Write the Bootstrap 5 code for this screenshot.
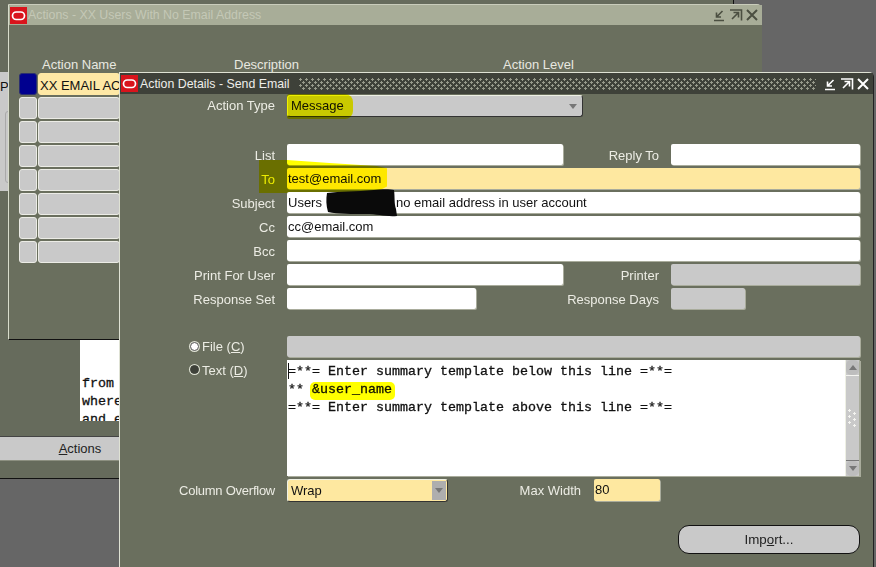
<!DOCTYPE html>
<html lang="en">

<head>
    <meta charset="UTF-8">
    <title>Action Details - Send Email</title>
    <link href="https://cdn.jsdelivr.net/npm/bootstrap@5.3.0/dist/css/bootstrap.min.css" rel="stylesheet">
    <style>
        body {
            margin: 0;
            background: #666666;
            font-family: "Liberation Sans", Arial, sans-serif;
            font-size: 13px;
        }

        .desk {
            width: 876px;
            height: 567px;
            overflow: hidden;
        }

        /* windows on the desktop */
        .base-win {
            left: 0;
            top: 0;
            width: 734px;
            height: 479px;
            background: #666b5c;
            border-right: 1px solid #111;
            border-bottom: 1px solid #111;
        }

        .back-win {
            left: 8px;
            top: 4px;
            width: 754px;
            height: 336px;
            background: #6a6f5e;
            border-left: 1px solid #d8dccb;
            border-top: 1px solid #c9ccbb;
            border-bottom: 1px solid #111;
            border-top-right-radius: 5px;
        }

        .front-win {
            left: 119px;
            top: 72px;
            width: 755px;
            height: 500px;
            background: #6a6f5e;
            border-left: 1px solid #dfe2d4;
            border-top: 1px solid #dfe2d4;
            border-right: 1px solid #222;
            border-top-right-radius: 5px;
            isolation: isolate;
        }

        /* base window pieces */
        .left-strip {
            width: 8px;
            height: 119px;
            margin-top: 72px;
            background: #c9c9c9;
            color: #111;
            padding-top: 5px;
            overflow: hidden;
        }

        .strip-frame {
            width: 6px;
            height: 72px;
            margin: 14px 0 0 5px;
            border: 1px solid #a9a9a9;
            border-radius: 3px;
        }

        .sql-box {
            width: 40px;
            height: 81px;
            margin: 149px 0 0 80px;
            padding: 35px 0 0 2px;
            background: #fff;
            overflow: hidden;
            white-space: pre;
            color: #111;
        }

        .mono-txt {
            font-family: "Liberation Mono", "Courier New", monospace;
            font-size: 13.33px;
            line-height: 18px;
            -webkit-text-stroke: 0.3px #111;
        }

        .actions-btn {
            width: 160px;
            height: 25px;
            margin-top: 15px;
            padding-top: 2px;
            background: #c9c9c9;
            color: #222;
            text-align: center;
            border-top: 1px solid #444;
            border-bottom: 1px solid #8c8f80;
        }

        /* title bars */
        .win-title {
            height: 20px;
            padding: 0 3px 0 1px;
            font-size: 12.35px;
        }

        .back-win .win-title {
            background: #a8ad98;
            color: #c4c8b6;
        }

        .front-win .win-title {
            height: 21px;
            background: #3e4139;
            color: #eeeeea;
        }

        .front-win .title-txt {
            margin: 1px 0 0 1px;
        }

        .title-dots {
            height: 12px;
            margin: 0 6px 0 9px;
            background-image:
                radial-gradient(circle at 1.5px 1.5px, #979a8b 1px, transparent 1.3px),
                radial-gradient(circle at 4.5px 4.5px, #979a8b 1px, transparent 1.3px);
            background-size: 6px 6px;
        }

        .logo-ic {
            width: 17px;
            height: 17px;
            margin-right: 1px;
            flex: none;
        }

        .ctl-ic {
            width: 14px;
            height: 14px;
            margin-left: 2px;
            flex: none;
        }

        .ctl-dim {
            color: #4b4f41;
        }

        /* multi-row block behind the details window */
        .head-row {
            height: 48px;
            padding-top: 32px;
            color: #e8e8e0;
            white-space: nowrap;
        }

        .head-col {
            line-height: 15px;
        }

        .data-row {
            height: 22px;
            margin: 0 0 2px 10px;
        }

        .row-handle {
            width: 18px;
            height: 22px;
            background: #c9c9c9;
            border: 1px solid #ecece6;
            border-radius: 3px;
        }

        .row-handle.on {
            background: #00008f;
            border-color: #2b2f6f;
        }

        .row-cell {
            width: 82px;
            height: 22px;
            margin-left: 1px;
            padding: 2px 1px 0;
            background: #c9c9c9;
            border: 1px solid #ecece6;
            border-radius: 3px;
            color: #111;
            white-space: nowrap;
        }

        .row-cell.on {
            background: #fee8a5;
            border-color: #fee8a5;
        }

        /* details form */
        .form-body {
            padding-top: 1px;
        }

        .fld-row {
            height: 21px;
            margin-bottom: 3px;
        }

        .lbl-main {
            width: 155px;
            flex: none;
            text-align: right;
            color: #ecece4;
            white-space: nowrap;
            padding-top: 2px;
        }

        .lbl-main.lbl-top {
            padding-top: 1px;
        }

        .lbl-main.lbl-tight {
            letter-spacing: -0.25px;
        }

        .lbl-side {
            flex: none;
            text-align: right;
            color: #ecece4;
            white-space: nowrap;
            padding-top: 2px;
        }

        .form-control.ora-fld {
            height: 21px;
            min-height: 0;
            flex: none;
            padding: 3px 1px 0;
            font-size: 13px;
            line-height: 15px;
            color: #111;
            background: #fff;
            border: 0;
            border-radius: 2px;
            box-shadow: 1px 1px 0 #a9ac9c;
            white-space: nowrap;
        }

        .form-control.ora-fld.req {
            background: #fee8a0;
        }

        .form-control.ora-fld.off {
            background: #c9c9c9;
        }

        .form-control.ora-fld.tall {
            height: 22px;
        }

        .w-full {
            width: 573px;
        }

        .w-a {
            width: 276px;
        }

        .w-b {
            width: 189px;
        }

        .w-c {
            width: 74px;
        }

        .w-num {
            width: 66px;
        }

        .gap-l {
            margin-left: 12px;
        }

        .gap-n {
            margin-left: 13px;
        }

        .side-a {
            width: 96px;
        }

        .side-b {
            width: 183px;
        }

        .side-c {
            width: 133px;
        }

        /* pick lists */
        .pick-box {
            height: 22px;
            padding: 0 1px 0 3px;
            color: #111;
            background: #c9c9c9;
            border: 1px solid #eef0e4;
            border-bottom-color: #333;
            border-right-color: #333;
            border-radius: 3px;
            flex: none;
            font-size: 13px;
        }

        .pick-box.type-sel {
            width: 296px;
            margin-bottom: 27px;
        }

        .pick-box.req {
            width: 161px;
            height: 23px;
            background: #fee8a0;
        }

        .pick-arrow {
            width: 0;
            height: 0;
            border-left: 4px solid transparent;
            border-right: 4px solid transparent;
            border-top: 5px solid #777;
        }

        .pick-btn {
            width: 14px;
            height: 19px;
            background: #aeaeae;
        }

        /* radios */
        .radio-lbl {
            width: 155px;
            flex: none;
            padding: 0 0 0 70px;
            color: #ecece4;
            white-space: nowrap;
        }

        .radio-lbl.text-opt {
            padding-top: 1px;
        }

        .radio-dot {
            width: 9px;
            height: 9px;
            margin-right: 3px;
            border-radius: 50%;
            background: #fff;
            border: 1px solid #555;
            box-shadow: 0 0 0 1px #dfe2d4;
            flex: none;
        }

        .radio-dot.on {
            background: #3e4139;
            border-color: #3e4139;
        }

        /* message text */
        .msg-box {
            width: 573px;
            height: 116px;
            background: #fff;
            box-shadow: 1px 1px 0 #a9ac9c;
            color: #111;
            margin-bottom: 3px;
        }

        .msg-text {
            padding: 3px 0 0 1px;
            white-space: pre;
        }

        .caret-mark {
            left: 1px;
            top: 3px;
            width: 1px;
            height: 16px;
            background: #111;
        }

        .scroll-rail {
            width: 15px;
            background: #c9c9c9;
            border-left: 1px solid #eef0e4;
            border-right: 1px solid #a9ac9c;
        }

        .scroll-end {
            height: 15px;
            border-radius: 5px;
            background: #bdbdbd;
        }

        .scroll-mid {
            border-top: 1px solid #f4f4f0;
            border-bottom: 1px solid #777;
        }

        .scroll-grip {
            width: 9px;
            height: 18px;
            background-image:
                radial-gradient(circle at 1.5px 1.5px, #f4f4f0 1px, transparent 1.3px),
                radial-gradient(circle at 6.5px 4.5px, #f4f4f0 1px, transparent 1.3px);
            background-size: 9px 6px;
        }

        .up-tri {
            width: 0;
            height: 0;
            border-left: 4px solid transparent;
            border-right: 4px solid transparent;
            border-bottom: 5px solid #777;
        }

        .down-tri {
            width: 0;
            height: 0;
            border-left: 4px solid transparent;
            border-right: 4px solid transparent;
            border-top: 5px solid #777;
        }

        .btn.import-btn {
            width: 182px;
            height: 29px;
            margin: 23px 0 0 558px;
            padding: 0;
            font-size: 13.33px;
            color: #222;
            background: #c9c9c9;
            border: 1px solid #111;
            border-radius: 11px;
            display: block;
        }

        /* marker pen on top of the form */
        .pen-mark {
            background: #ffff00;
            mix-blend-mode: multiply;
            pointer-events: none;
        }

        .pen-type {
            left: 167px;
            top: -1px;
            width: 66px;
            height: 25px;
            border-radius: 2px 8px 8px 2px;
        }

        .pen-to {
            left: 139px;
            top: -8px;
            width: 128px;
            height: 33px;
            clip-path: polygon(0 0, 22% 0, 55% 3px, 92% 6px, 100% 25%, 100% 80%, 90% 100%, 22% 100%, 0 100%);
        }

        .pen-name {
            left: 23px;
            top: 22px;
            width: 85px;
            height: 18px;
            border-radius: 5px;
        }

        .ink-blot {
            left: 206px;
            top: -3px;
            width: 74px;
            height: 28px;
        }
    </style>
</head>

<body>
    <svg width="0" height="0" class="position-absolute">
        <symbol id="ora-logo" viewBox="0 0 17 17">
            <rect width="17" height="17" fill="#d8141c" />
            <rect x="2.5" y="5" width="12" height="7.5" rx="3.7" fill="none" stroke="#fff" stroke-width="1.7" />
        </symbol>
        <symbol id="ic-min" viewBox="0 0 14 14">
            <path d="M1 12.5H11M9.5 3L4 8.5M3.5 4.5V9H8" fill="none" stroke="currentColor" stroke-width="1.6" />
        </symbol>
        <symbol id="ic-max" viewBox="0 0 14 14">
            <path d="M1 2H12.5V12.5M3 11L9 5M4.5 4.5H9.5V9.5" fill="none" stroke="currentColor" stroke-width="1.6" />
        </symbol>
        <symbol id="ic-close" viewBox="0 0 14 14">
            <path d="M2 2L12 12M12 2L2 12" fill="none" stroke="currentColor" stroke-width="2" />
        </symbol>
    </svg>

    <div class="desk position-relative">
        <!-- window underneath everything -->
        <div class="base-win position-absolute d-flex flex-column">
            <div class="left-strip">P<div class="strip-frame"></div></div>
            <div class="sql-box mono-txt">from
where
and e</div>
            <div class="actions-btn"><u>A</u>ctions</div>
        </div>

        <!-- Actions list window -->
        <div class="back-win position-absolute">
            <div class="win-title d-flex align-items-center">
                <svg class="logo-ic">
                    <use href="#ora-logo" />
                </svg>
                <span class="title-txt">Actions - XX Users With No Email Address</span>
                <span class="ms-auto d-flex ctl-dim">
                    <svg class="ctl-ic"><use href="#ic-min" /></svg>
                    <svg class="ctl-ic"><use href="#ic-max" /></svg>
                    <svg class="ctl-ic"><use href="#ic-close" /></svg>
                </span>
            </div>
            <div class="head-row d-flex">
                <span class="head-col" style="margin-left:33px;width:192px">Action Name</span>
                <span class="head-col" style="width:269px">Description</span>
                <span class="head-col">Action Level</span>
            </div>
            <div id="action-rows"></div>
        </div>

        <!-- Action details window -->
        <div class="front-win position-absolute">
            <div class="win-title d-flex align-items-center">
                <svg class="logo-ic">
                    <use href="#ora-logo" />
                </svg>
                <span class="title-txt">Action Details - Send Email</span>
                <span class="title-dots flex-grow-1"></span>
                <span class="d-flex text-white">
                    <svg class="ctl-ic"><use href="#ic-min" /></svg>
                    <svg class="ctl-ic"><use href="#ic-max" /></svg>
                    <svg class="ctl-ic"><use href="#ic-close" /></svg>
                </span>
            </div>

            <div class="form-body">
                <div class="d-flex position-relative">
                    <div class="lbl-main lbl-top">Action Type</div>
                    <div class="pick-box type-sel gap-l d-flex align-items-center justify-content-between">
                        <span>Message</span>
                        <span class="pick-arrow me-1"></span>
                    </div>
                    <span class="pen-mark pen-type position-absolute"></span>
                </div>

                <div class="fld-row d-flex">
                    <div class="lbl-main">List</div>
                    <div class="form-control ora-fld w-a gap-l"></div>
                    <div class="lbl-side side-a">Reply To</div>
                    <div class="form-control ora-fld w-b gap-l"></div>
                </div>
                <div class="fld-row d-flex position-relative">
                    <div class="lbl-main">To</div>
                    <div class="form-control ora-fld req w-full gap-l">test@email.com</div>
                    <span class="pen-mark pen-to position-absolute"></span>
                </div>
                <div class="fld-row d-flex position-relative">
                    <div class="lbl-main">Subject</div>
                    <div class="form-control ora-fld w-full gap-l">Users<span class="d-inline-block" style="width:74px"></span>no email address in user account</div>
                    <svg class="ink-blot position-absolute" viewBox="0 0 74 28">
                        <path d="M1 4C14 2 30 3 48 1C56 0 64 0 68 1C69 8 68 14 70 20L71 27C60 28 52 25 40 25C26 25 12 25 2 23C0 16 0 10 1 4Z" fill="#0a0a0a" />
                    </svg>
                </div>
                <div class="fld-row d-flex">
                    <div class="lbl-main">Cc</div>
                    <div class="form-control ora-fld w-full gap-l">cc@email.com</div>
                </div>
                <div class="fld-row d-flex">
                    <div class="lbl-main">Bcc</div>
                    <div class="form-control ora-fld w-full gap-l"></div>
                </div>
                <div class="fld-row d-flex">
                    <div class="lbl-main">Print For User</div>
                    <div class="form-control ora-fld w-a gap-l"></div>
                    <div class="lbl-side side-a">Printer</div>
                    <div class="form-control ora-fld off w-b gap-l"></div>
                </div>
                <div class="fld-row d-flex" style="margin-bottom:27px">
                    <div class="lbl-main">Response Set</div>
                    <div class="form-control ora-fld w-b gap-l"></div>
                    <div class="lbl-side side-b">Response Days</div>
                    <div class="form-control ora-fld off w-c gap-l"></div>
                </div>

                <div class="fld-row d-flex">
                    <div class="radio-lbl d-flex align-items-center"><span class="radio-dot"></span>File (<u>C</u>)</div>
                    <div class="form-control ora-fld off w-full gap-l"></div>
                </div>
                <div class="d-flex">
                    <div class="radio-lbl text-opt d-flex align-items-start"><span class="radio-dot on mt-1"></span>Text (<u>D</u>)</div>
                    <div class="msg-box gap-l d-flex position-relative">
                        <div class="msg-text mono-txt flex-grow-1">=**= Enter summary template below this line =**=
** &amp;user_name
=**= Enter summary template above this line =**=</div>
                        <span class="caret-mark position-absolute"></span>
                        <span class="pen-mark pen-name position-absolute"></span>
                        <div class="scroll-rail d-flex flex-column">
                            <div class="scroll-end d-flex align-items-center justify-content-center"><span class="up-tri"></span></div>
                            <div class="scroll-mid flex-grow-1 d-flex align-items-center justify-content-center"><span class="scroll-grip"></span></div>
                            <div class="scroll-end d-flex align-items-center justify-content-center"><span class="down-tri"></span></div>
                        </div>
                    </div>
                </div>

                <div class="d-flex">
                    <div class="lbl-main lbl-tight">Column Overflow</div>
                    <div class="pick-box req gap-l d-flex align-items-center justify-content-between">
                        <span>Wrap</span>
                        <span class="pick-btn d-flex align-items-center justify-content-center"><span class="pick-arrow"></span></span>
                    </div>
                    <div class="lbl-side side-c">Max Width</div>
                    <div class="form-control ora-fld req tall w-num gap-n">80</div>
                </div>

                <button type="button" class="btn import-btn">Imp<u>o</u>rt...</button>
            </div>
        </div>
    </div>

    <script src="https://cdn.jsdelivr.net/npm/bootstrap@5.3.0/dist/js/bootstrap.bundle.min.js"></script>
    <script>
        // eight rows in the block, only the first one is filled
        const rows = document.getElementById("action-rows");
        for (let i = 0; i < 8; i++) {
            rows.innerHTML += `
        <div class="data-row d-flex">
          <div class="row-handle ${i === 0 ? "on" : ""}"></div>
          <div class="row-cell ${i === 0 ? "on" : ""}">${i === 0 ? "XX EMAIL AC" : ""}</div>
        </div>`;
        }
    </script>
</body>

</html>
